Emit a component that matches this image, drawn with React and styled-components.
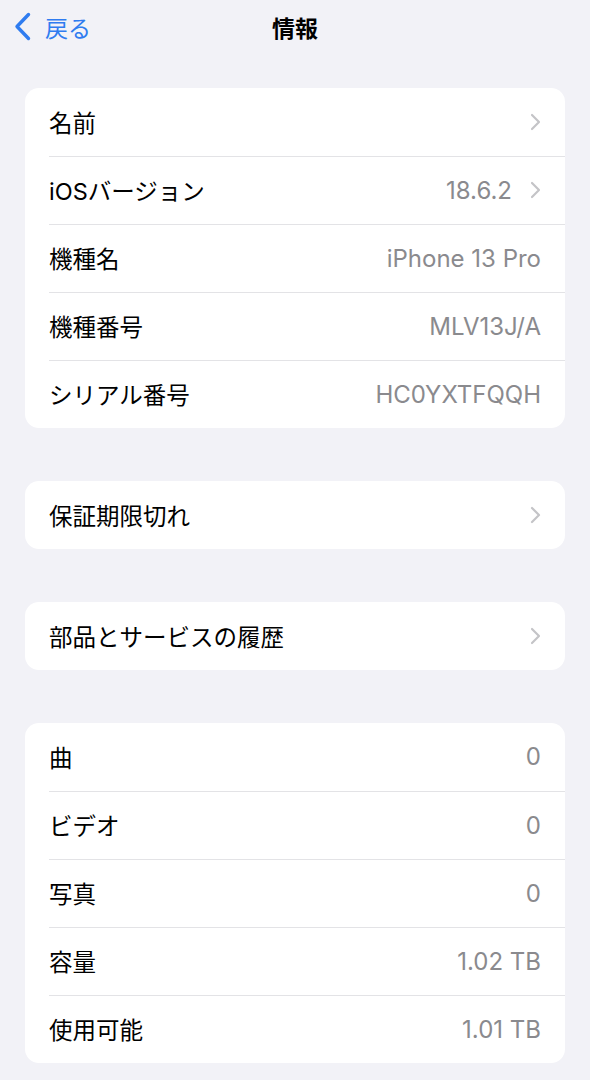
import React from "react";
import styled, { createGlobalStyle } from "styled-components";

const Global = createGlobalStyle`
  html, body { margin: 0; padding: 0; background: #f2f2f7; }
  body { font-family: "Inter", "Noto Sans CJK JP", sans-serif; -webkit-font-smoothing: antialiased; }
`;

const Page = styled.div`
  width: 590px;
  min-height: 1080px;
  background: #f2f2f7;
  display: flex;
  flex-direction: column;
`;

const NavBar = styled.header`
  height: 56px;
  box-sizing: border-box;
  display: grid;
  grid-template-columns: 1fr auto 1fr;
  align-items: center;
  padding: 0 14px 3px;
`;

const BackButton = styled.button`
  justify-self: start;
  display: flex;
  align-items: center;
  gap: 14px;
  background: none;
  border: none;
  padding: 0;
  color: #2f7cf0;
  font-family: inherit;
  font-size: 23px;
  cursor: pointer;
`;

const Title = styled.h1`
  margin: 0;
  font-size: 23px;
  font-weight: 700;
  color: #000;
`;

const Content = styled.main`
  display: flex;
  flex-direction: column;
  gap: 53px;
  padding: 32px 25px 18px;
`;

const Group = styled.section`
  background: #fff;
  border-radius: 14px;
  overflow: hidden;
`;

const Row = styled.div`
  padding-left: 24px;
  display: flex;
`;

const RowInner = styled.div`
  flex: 1;
  height: 68px;
  display: flex;
  align-items: center;
  justify-content: space-between;
  padding-right: 24px;
  padding-bottom: 1px;
  border-top: ${(p) => (p.$first ? "none" : "1px solid #e3e3e6")};
  box-sizing: border-box;
`;

const Label = styled.span`
  font-size: 23.5px;
  color: #000;
`;

const Trail = styled.span`
  display: flex;
  align-items: center;
  gap: 18px;
`;

const Value = styled.span`
  font-size: 24px;
  color: #8a8a8e;
`;

const Chevron = () => (
  <svg width="11" height="18" viewBox="0 0 11 18" fill="none">
    <path d="M2 2 L9 9 L2 16" stroke="#c4c4c7" strokeWidth="2.2" strokeLinecap="round" strokeLinejoin="round" />
  </svg>
);

const BackChevron = () => (
  <svg width="17" height="29" viewBox="0 0 17 29" fill="none">
    <path d="M14.5 2.5 L3 14.5 L14.5 26.5" stroke="#2f7cf0" strokeWidth="3.4" strokeLinecap="round" strokeLinejoin="round" />
  </svg>
);

const groups = [
  [
    { label: "名前", chevron: true },
    { label: "iOSバージョン", value: "18.6.2", chevron: true },
    { label: "機種名", value: "iPhone 13 Pro" },
    { label: "機種番号", value: "MLV13J/A" },
    { label: "シリアル番号", value: "HC0YXTFQQH" },
  ],
  [{ label: "保証期限切れ", chevron: true }],
  [{ label: "部品とサービスの履歴", chevron: true }],
  [
    { label: "曲", value: "0" },
    { label: "ビデオ", value: "0" },
    { label: "写真", value: "0" },
    { label: "容量", value: "1.02 TB" },
    { label: "使用可能", value: "1.01 TB" },
  ],
];

export default function App() {
  return (
    <>
      <Global />
      <Page>
        <NavBar>
          <BackButton>
            <BackChevron />
            戻る
          </BackButton>
          <Title>情報</Title>
          <span />
        </NavBar>
        <Content>
          {groups.map((rows, gi) => (
            <Group key={gi}>
              {rows.map((r, i) => (
                <Row key={r.label}>
                  <RowInner $first={i === 0}>
                    <Label>{r.label}</Label>
                    <Trail>
                      {r.value && <Value>{r.value}</Value>}
                      {r.chevron && <Chevron />}
                    </Trail>
                  </RowInner>
                </Row>
              ))}
            </Group>
          ))}
        </Content>
      </Page>
    </>
  );
}
